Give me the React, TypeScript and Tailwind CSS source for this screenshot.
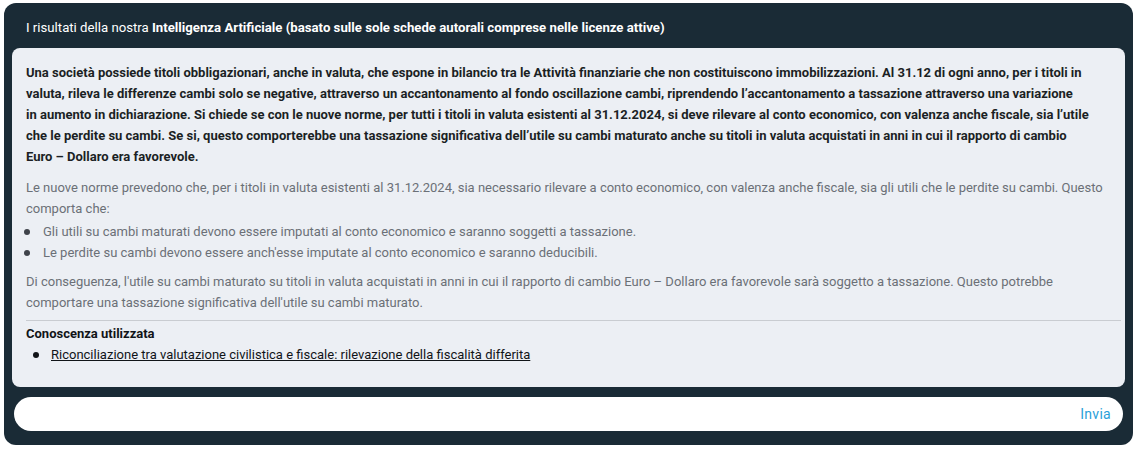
import React from "react";

const bullets = [
  "Gli utili su cambi maturati devono essere imputati al conto economico e saranno soggetti a tassazione.",
  "Le perdite su cambi devono essere anch'esse imputate al conto economico e saranno deducibili.",
];

// righe della domanda, spezzate come nello screenshot
const question = [
  "Una società possiede titoli obbligazionari, anche in valuta, che espone in bilancio tra le Attività finanziarie che non costituiscono immobilizzazioni. Al 31.12 di ogni anno, per i titoli in",
  "valuta, rileva le differenze cambi solo se negative, attraverso un accantonamento al fondo oscillazione cambi, riprendendo l’accantonamento a tassazione attraverso una variazione",
  "in aumento in dichiarazione. Si chiede se con le nuove norme, per tutti i titoli in valuta esistenti al 31.12.2024, si deve rilevare al conto economico, con valenza anche fiscale, sia l’utile",
  "che le perdite su cambi. Se si, questo comporterebbe una tassazione significativa dell’utile su cambi maturato anche su titoli in valuta acquistati in anni in cui il rapporto di cambio",
  "Euro – Dollaro era favorevole.",
];

const App: React.FC = () => {
  return (
    <div className="w-[1137px] h-[449px] bg-white pt-[3px] pl-[4px] font-['Roboto',sans-serif]">
      <div className="w-[1129px] h-[442px] bg-[#1a2b36] rounded-[12px] px-2 flex flex-col">
        <div className="h-[45px] pt-[5px] flex items-center pl-[14px] text-[13.2px] text-white">
          <span>
            I risultati della nostra{" "}
            <span className="font-bold">
              Intelligenza Artificiale (basato sulle sole schede autorali comprese nelle licenze attive)
            </span>
          </span>
        </div>

        <div className="bg-[#eceff4] rounded-[8px] h-[339px] pl-[14px] pr-[10px] pt-[14px] text-[13px]">
          <p className="font-bold text-[#1b1f24] leading-[21px]">
            {question.map((line, i) => (
              <span key={i} className="block whitespace-nowrap">
                {line}
              </span>
            ))}
          </p>

          <div className="mt-[10px] text-[#6b7077] leading-[21px] pr-[4px]">
            <p>
              Le nuove norme prevedono che, per i titoli in valuta esistenti al 31.12.2024, sia necessario rilevare a
              conto economico, con valenza anche fiscale, sia gli utili che le perdite su cambi. Questo comporta che:
            </p>
            <ul className="mt-[2px]">
              {bullets.map((b) => (
                <li key={b} className="flex items-center">
                  <span className="w-[6px] h-[6px] rounded-full bg-[#3f434a] ml-[-2px] mr-[13px] shrink-0" />
                  {b}
                </li>
              ))}
            </ul>
            <p className="mt-[8px]">
              Di conseguenza, l'utile su cambi maturato su titoli in valuta acquistati in anni in cui il rapporto di
              cambio Euro – Dollaro era favorevole sarà soggetto a tassazione. Questo potrebbe comportare una tassazione
              significativa dell'utile su cambi maturato.
            </p>
          </div>

          <hr className="mt-[7px] mr-[-6px] border-[#c9ccd1]" />

          <div className="mt-[2px] leading-[21px] text-[#111418]">
            <p className="font-bold">Conoscenza utilizzata</p>
            <ul>
              <li className="flex items-center pl-[7px]">
                <span className="w-[6px] h-[6px] rounded-full bg-[#111418] mr-[12px] shrink-0" />
                <span className="underline">
                  Riconciliazione tra valutazione civilistica e fiscale: rilevazione della fiscalità differita
                </span>
              </li>
            </ul>
          </div>
        </div>

        <div className="mt-[10px] mx-[2px] h-[34px] bg-white rounded-full flex items-center justify-end pr-[12px]">
          <span className="text-[14px] tracking-[0.3px] text-[#2b9fd9]">Invia</span>
        </div>
      </div>
    </div>
  );
};

export default App;
